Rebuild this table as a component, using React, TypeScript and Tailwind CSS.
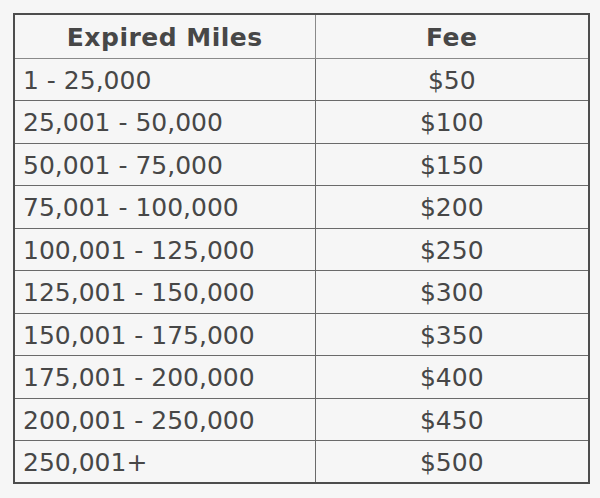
const rows: [string, string][] = [
  ["1 - 25,000", "$50"],
  ["25,001 - 50,000", "$100"],
  ["50,001 - 75,000", "$150"],
  ["75,001 - 100,000", "$200"],
  ["100,001 - 125,000", "$250"],
  ["125,001 - 150,000", "$300"],
  ["150,001 - 175,000", "$350"],
  ["175,001 - 200,000", "$400"],
  ["200,001 - 250,000", "$450"],
  ["250,001+", "$500"],
]

export default function App() {
  return (
    <div className="w-[600px] h-[498px] bg-[#f6f6f6] pt-[13px] pl-[13px] font-['DejaVu_Sans',sans-serif] text-[#474747]">
      <table className="w-[577px] border-collapse border-2 border-[#4d4d4d] table-fixed">
        <colgroup>
          <col className="w-[301px]" />
          <col />
        </colgroup>
        <thead>
          <tr className="h-[44px]">
            <th className="border border-[#8a8a8a] text-[25px] tracking-[0.5px] font-bold text-center p-0 pt-[2px] leading-none">Expired Miles</th>
            <th className="border border-[#8a8a8a] text-[25px] tracking-[0.5px] font-bold text-center p-0 pt-[2px] leading-none">Fee</th>
          </tr>
        </thead>
        <tbody>
          {rows.map(([miles, fee]) => (
            <tr key={miles} className="h-[42.5px]">
              <td className="border border-[#6a6a6a] text-[25px] pl-[8px] p-0 pt-[2px] leading-none">{miles}</td>
              <td className="border border-[#6a6a6a] text-[25px] text-center p-0 pt-[2px] leading-none">{fee}</td>
            </tr>
          ))}
        </tbody>
      </table>
    </div>
  )
}
